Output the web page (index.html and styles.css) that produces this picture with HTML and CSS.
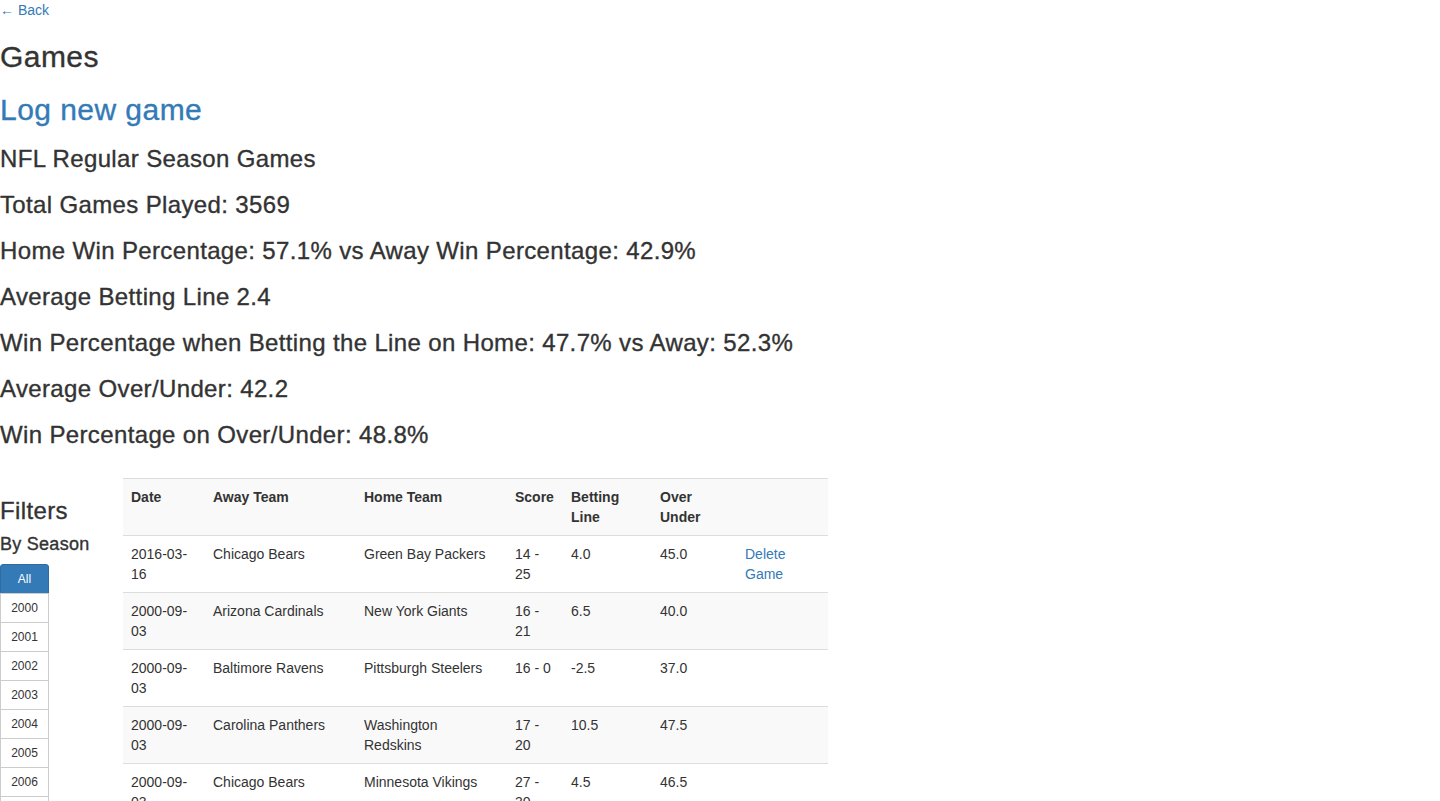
FILE: index.html
```html
<!DOCTYPE html>
<html lang="en">
<head>
<meta charset="utf-8">
<title>Games</title>
<link rel="stylesheet" href="styles.css">
</head>
<body>
<a class="link" href="#">&larr; Back</a>
<h2 class="h2">Games</h2>
<h2 class="h2"><a class="link" href="#">Log new game</a></h2>
<h3 class="h3">NFL Regular Season Games</h3>
<h3 class="h3">Total Games Played: 3569</h3>
<h3 class="h3">Home Win Percentage: 57.1% vs Away Win Percentage: 42.9%</h3>
<h3 class="h3">Average Betting Line 2.4</h3>
<h3 class="h3">Win Percentage when Betting the Line on Home: 47.7% vs Away: 52.3%</h3>
<h3 class="h3">Average Over/Under: 42.2</h3>
<h3 class="h3">Win Percentage on Over/Under: 48.8%</h3>

<div class="games-row">
  <aside class="filters">
    <h3 class="h3">Filters</h3>
    <h4 class="h4">By Season</h4>
    <div class="btn-group">
      <button class="btn btn-active">All</button>
      <button class="btn">2000</button>
      <button class="btn">2001</button>
      <button class="btn">2002</button>
      <button class="btn">2003</button>
      <button class="btn">2004</button>
      <button class="btn">2005</button>
      <button class="btn">2006</button>
      <button class="btn">2007</button>
      <button class="btn">2008</button>
      <button class="btn">2009</button>
      <button class="btn">2010</button>
      <button class="btn">2011</button>
      <button class="btn">2012</button>
      <button class="btn">2013</button>
      <button class="btn">2014</button>
      <button class="btn">2015</button>
    </div>
  </aside>
  <table class="games">
    <colgroup>
      <col class="w-date">
      <col class="w-team">
      <col class="w-team">
      <col class="w-score">
      <col class="w-line">
      <col class="w-ou">
      <col class="w-act">
    </colgroup>
    <tbody>
      <tr>
        <th>Date</th>
        <th>Away Team</th>
        <th class="c-home">Home Team</th>
        <th>Score</th>
        <th>Betting Line</th>
        <th>Over Under</th>
        <th></th>
      </tr>
      <tr>
        <td>2016-03-16</td><td>Chicago Bears</td><td class="c-home">Green Bay Packers</td><td>14 - 25</td><td>4.0</td><td>45.0</td><td><a class="link" href="#">Delete Game</a></td>
      </tr>
      <tr>
        <td>2000-09-03</td><td>Arizona Cardinals</td><td class="c-home">New York Giants</td><td>16 - 21</td><td>6.5</td><td>40.0</td><td></td>
      </tr>
      <tr>
        <td>2000-09-03</td><td>Baltimore Ravens</td><td class="c-home">Pittsburgh Steelers</td><td>16 - 0</td><td>-2.5</td><td>37.0</td><td></td>
      </tr>
      <tr>
        <td>2000-09-03</td><td>Carolina Panthers</td><td class="c-home">Washington Redskins</td><td>17 - 20</td><td>10.5</td><td>47.5</td><td></td>
      </tr>
      <tr>
        <td>2000-09-03</td><td>Chicago Bears</td><td class="c-home">Minnesota Vikings</td><td>27 - 30</td><td>4.5</td><td>46.5</td><td></td>
      </tr>
      <tr>
        <td>2000-09-03</td><td>Cincinnati Bengals</td><td class="c-home">Cleveland Browns</td><td>0 - 24</td><td>3.0</td><td>34.5</td><td></td>
      </tr>
    </tbody>
  </table>
</div>
</body>
</html>
```
FILE: styles.css
```css
html, body {
  margin: 0;
  padding: 0;
}
body {
  font-family: "Liberation Sans", Arial, Helvetica, sans-serif;
  font-size: 14px;
  line-height: 20px;
  color: #333;
  background: #fff;
}
.link {
  color: #337ab7;
  text-decoration: none;
}
.h2, .h3, .h4 {
  font-weight: 500;
  color: #333;
  letter-spacing: 0.015em;
  -webkit-text-stroke: 0.35px currentColor;
}
.h2 {
  font-size: 30px;
  line-height: 33px;
  margin: 20px 0 10px;
}
.h3 {
  font-size: 24px;
  line-height: 26px;
  margin: 20px 0 10px;
}
.h4 {
  font-size: 18px;
  line-height: 20px;
  margin: 10px 0 10px;
}
.games-row {
  display: flex;
  align-items: flex-start;
  margin-top: 30px;
}
.filters {
  width: 123px;
  flex: none;
}
.btn-group {
  display: flex;
  flex-direction: column;
  align-items: flex-start;
  width: 49px;
}
.btn {
  font-family: inherit;
  font-size: 12px;
  line-height: 18px;
  padding: 5px 10px;
  width: 49px;
  border: 1px solid #ccc;
  background: #fff;
  color: #333;
  border-radius: 0;
  margin: -1px 0 0 0;
  text-align: center;
}
.btn:first-child {
  margin-top: 0;
  border-radius: 3px 3px 0 0;
}
.btn-active {
  background: #337ab7;
  border-color: #2e6da4;
  color: #fff;
}
.games {
  width: 705px;
  table-layout: fixed;
  border-collapse: collapse;
  border-spacing: 0;
}
.w-date { width: 82px; }
.w-team { width: 151px; }
.w-score { width: 56px; }
.w-line { width: 89px; }
.w-ou { width: 85px; }
.w-act { width: 91px; }
.games th, .games td {
  padding: 8px;
  text-align: left;
  vertical-align: top;
  border-top: 1px solid #ddd;
  line-height: 20px;
}
.games th {
  font-weight: bold;
}
.games .c-home {
  padding-right: 14px;
}
.games tr:nth-child(odd) {
  background: #f9f9f9;
}
```
